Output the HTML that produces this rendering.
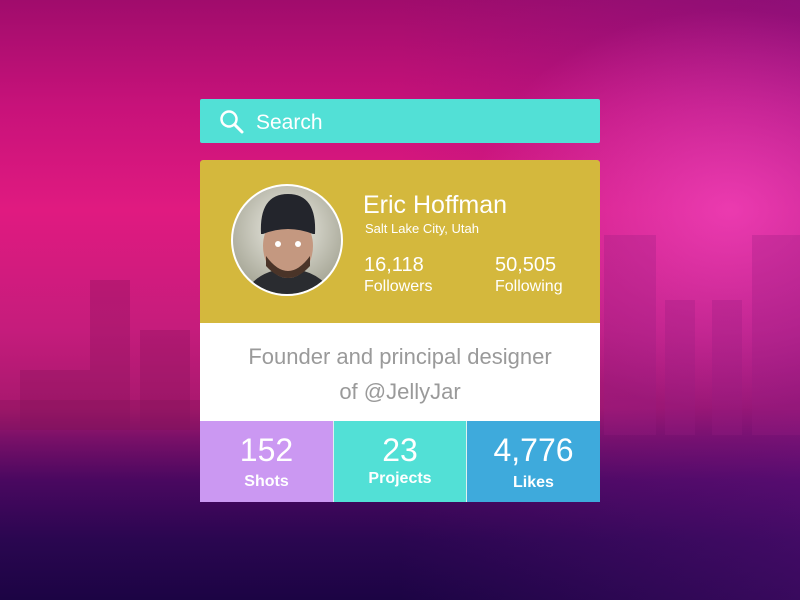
<!DOCTYPE html>
<html><head><style>
*{margin:0;padding:0;box-sizing:border-box}
body{width:800px;height:600px;overflow:hidden;position:relative;font-family:"Liberation Sans",sans-serif;
background:linear-gradient(180deg,#a00c6c 0%,#c8127a 18%,#e01a80 35%,#c51c7c 55%,#a8186e 68%,#7a1068 73%,#4a0860 80%,#2a0650 90%,#1c0444 100%);}
.r{position:absolute;inset:0;background:radial-gradient(ellipse 260px 200px at 730px 210px,rgba(250,70,190,.75),rgba(250,70,190,0) 100%),linear-gradient(90deg,rgba(0,0,0,0) 50%,rgba(110,20,140,.35) 100%);}
.b{position:absolute;background:rgba(130,20,90,.3)}
.br{position:absolute;background:rgba(150,30,130,.28)}
.card{position:absolute;left:200px;width:400px}
.search{top:99px;height:44px;background:#52e0d6;border-radius:2px;color:#fff;font-size:21px;padding:12px 0 0 56px}
.prof{top:160px;height:163px;background:#d4b83d;border-radius:3px 3px 0 0}
.av{position:absolute;left:31px;top:24px;width:112px;height:112px;border-radius:50%;border:2px solid #fff;overflow:hidden;background:radial-gradient(circle at 50% 40%,#f0efe8,#a8a898 75%)}
.w{color:#fff;position:absolute}
.bio{top:323px;height:98px;background:#fff;text-align:center;color:#9a9a9a;font-size:22px;line-height:35px;padding-top:16px;font-weight:300}
.st{top:421px;height:81px;display:flex}
.st div{color:#fff;text-align:center;position:relative}
.n{font-size:32px;font-weight:300;display:block;padding-top:11px}
.l{font-size:16px;font-weight:bold;display:block;margin-top:4px}
</style></head><body>
<div class="r"></div>
<div class="b" style="left:90px;top:280px;width:40px;height:150px"></div>
<div class="b" style="left:140px;top:330px;width:50px;height:100px"></div>
<div class="b" style="left:20px;top:370px;width:70px;height:60px"></div>
<div class="b" style="left:0;top:400px;width:200px;height:30px"></div>
<div class="br" style="left:604px;top:235px;width:52px;height:200px"></div>
<div class="br" style="left:665px;top:300px;width:30px;height:135px"></div>
<div class="br" style="left:712px;top:300px;width:30px;height:135px"></div>
<div class="br" style="left:752px;top:235px;width:48px;height:200px"></div>
<div class="card search"><svg style="position:absolute;left:19px;top:10px" width="26" height="26" viewBox="0 0 26 26"><circle cx="10" cy="10" r="7.5" fill="none" stroke="#fff" stroke-width="2.5"/><path d="M15.5 15.5 L23 23" stroke="#fff" stroke-width="3" stroke-linecap="round"/></svg>Search</div>
<div class="card prof">
<div class="av"><svg width="112" height="112" viewBox="0 0 112 112"><path d="M10 112 Q20 85 55 82 Q90 85 102 112Z" fill="#2a2c30"/><ellipse cx="55" cy="60" rx="25" ry="32" fill="#c49880"/><path d="M33 70 Q55 100 77 70 L77 80 Q55 104 33 80Z" fill="#4a3428"/><path d="M28 48 Q26 8 55 8 Q84 8 82 48 L80 48 Q55 38 30 48Z" fill="#23252c"/><circle cx="45" cy="58" r="3" fill="#fff"/><circle cx="65" cy="58" r="3" fill="#fff"/></svg></div>
<div class="w" style="left:163px;top:31px;font-size:25px">Eric Hoffman</div>
<div class="w" style="left:165px;top:61px;font-size:13px">Salt Lake City, Utah</div>
<div class="w" style="left:164px;top:94px;font-size:20px">16,118</div>
<div class="w" style="left:164px;top:118px;font-size:16px">Followers</div>
<div class="w" style="left:295px;top:94px;font-size:20px">50,505</div>
<div class="w" style="left:295px;top:118px;font-size:16px">Following</div>
</div>
<div class="card bio">Founder and principal designer<br>of @JellyJar</div>
<div class="card st">
<div style="width:133px;background:#cb98f2"><span class="n">152</span><span class="l">Shots</span></div>
<div style="width:1px;background:#e0f0f0"></div>
<div style="width:132px;background:#52e0d6"><span class="n">23</span><span class="l" style="margin-top:1px">Projects</span></div>
<div style="width:1px;background:#e0f0f0"></div>
<div style="width:133px;background:#3eaadc"><span class="n">4,776</span><span class="l" style="margin-top:5px">Likes</span></div>
</div>
</body></html>
